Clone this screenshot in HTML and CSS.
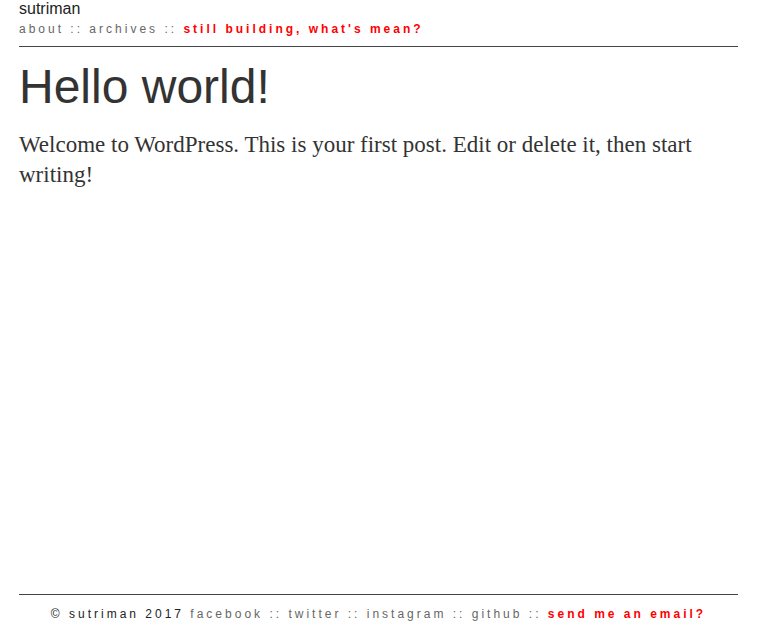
FILE: index.html
```html
<!DOCTYPE html>
<html>
<head>
<meta charset="utf-8">
<link rel="stylesheet" href="styles.css">
</head>
<body>
<div class="page">
  <header class="site-header">
    <div class="site-title">sutriman</div>
    <nav class="nav">about :: archives :: <span class="hot">still building, what's mean?</span></nav>
  </header>
  <main class="content">
    <h1 class="post-title">Hello world!</h1>
    <p class="post-body">Welcome to WordPress. This is your first post. Edit or delete it, then start writing!</p>
  </main>
  <footer class="site-footer">
    <span class="copy">© sutriman 2017</span> facebook :: twitter :: instagram :: github :: <span class="hot">send me an email?</span>
  </footer>
</div>
</body>
</html>
```
FILE: styles.css
```css
html, body { margin: 0; padding: 0; background: #fff; }
body { font-family: "Liberation Sans", Arial, sans-serif; color: #333; }
.page {
  width: 719px;
  margin-left: 19px;
  height: 633px;
  display: flex;
  flex-direction: column;
}
.site-header {
  border-bottom: 1px solid #444;
  padding-bottom: 6px;
}
.site-title {
  font-size: 16px;
  line-height: 17px;
  color: #222;
}
.nav {
  font-size: 12px;
  letter-spacing: 3px;
  color: #666;
  line-height: 22px;
  padding-top: 1px;
}
.hot { color: #f00; font-weight: bold; }
.content { flex: 1; }
.post-title {
  font-size: 48px;
  font-weight: normal;
  margin: 10px 0 0;
  line-height: 60px;
  color: #333;
}
.post-body {
  font-family: "Liberation Serif", Georgia, serif;
  font-size: 23px;
  line-height: 30px;
  margin: 13px 0 0;
  color: #333;
}
.site-footer {
  border-top: 1px solid #444;
  text-align: center;
  font-size: 12px;
  letter-spacing: 3px;
  color: #666;
  padding: 10px 0 10px;
  line-height: 18px;
}
.copy { color: #222; }
```
